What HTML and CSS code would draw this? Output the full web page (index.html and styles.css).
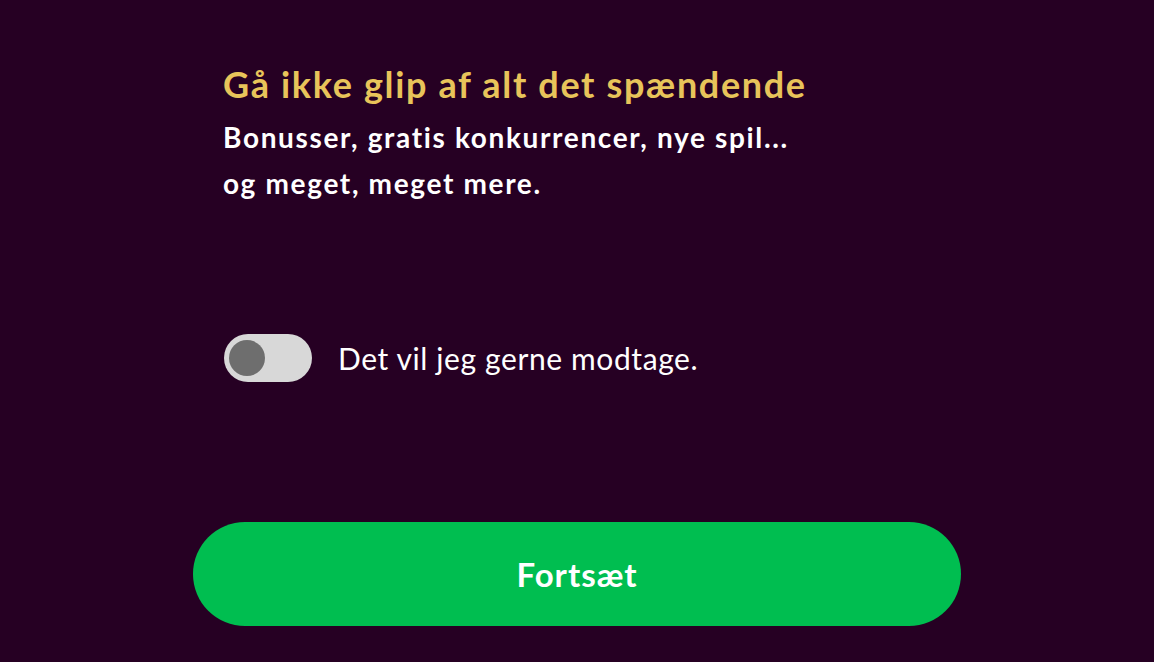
FILE: index.html
```html
<!DOCTYPE html>
<html lang="da">
<head>
<meta charset="utf-8">
<link rel="stylesheet" href="styles.css">
</head>
<body>
<main class="panel">
  <section class="intro">
    <h1 class="title">Gå ikke glip af alt det spændende</h1>
    <p class="lead">Bonusser, gratis konkurrencer, nye spil...<br>og meget, meget mere.</p>
  </section>
  <label class="consent">
    <span class="toggle"><span class="knob"></span></span>
    <span class="consent-text">Det vil jeg gerne modtage.</span>
  </label>
  <button class="cta" type="button">Fortsæt</button>
</main>
</body>
</html>
```
FILE: styles.css
```css
html, body {
  margin: 0;
  padding: 0;
  background: #260023;
  height: 100%;
}
body {
  font-family: Lato, "Noto Sans", sans-serif;
  color: #ffffff;
}
.panel {
  width: 768px;
  margin: 0 auto;
  padding-top: 63px;
  display: flex;
  flex-direction: column;
}
.intro {
  padding-left: 30px;
}
.title {
  margin: 0;
  font-size: 36px;
  font-weight: 700;
  line-height: 42px;
  letter-spacing: 1.65px;
  color: #e8c45a;
}
.lead {
  margin: 9px 0 0;
  font-size: 28px;
  font-weight: 700;
  line-height: 46px;
  letter-spacing: 1.65px;
  color: #ffffff;
}
.consent {
  margin-top: 128px;
  padding-left: 31px;
  display: flex;
  align-items: center;
  gap: 26px;
}
.toggle {
  width: 88px;
  height: 48px;
  border-radius: 24px;
  background: #d8d8d8;
  display: flex;
  align-items: center;
  padding-left: 5px;
  box-sizing: border-box;
}
.knob {
  width: 36px;
  height: 36px;
  border-radius: 50%;
  background: #6e6e6e;
}
.consent-text {
  font-size: 30px;
  font-weight: 400;
  letter-spacing: 0.6px;
}
.cta {
  margin-top: 140px;
  height: 104px;
  border: 0;
  border-radius: 52px;
  background: #00be50;
  color: #ffffff;
  font-family: Lato, "Noto Sans", sans-serif;
  font-size: 33px;
  font-weight: 700;
  letter-spacing: 1px;
}
```
